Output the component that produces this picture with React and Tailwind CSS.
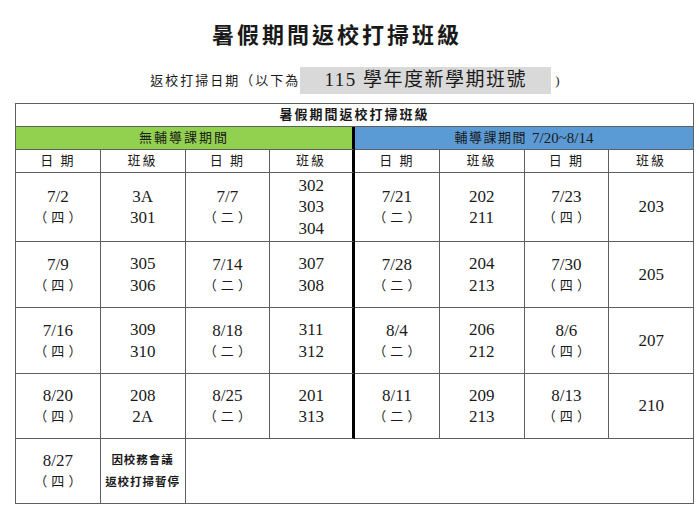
import React from 'react';

const FONT = '"Liberation Serif", "Noto Sans CJK TC", serif';

const leftRows = [
  [['7/2', '四'], ['3A', '301'], ['7/7', '二'], ['302', '303', '304']],
  [['7/9', '四'], ['305', '306'], ['7/14', '二'], ['307', '308']],
  [['7/16', '四'], ['309', '310'], ['8/18', '二'], ['311', '312']],
  [['8/20', '四'], ['208', '2A'], ['8/25', '二'], ['201', '313']],
];

const rightRows = [
  [['7/21', '二'], ['202', '211'], ['7/23', '四'], ['203']],
  [['7/28', '二'], ['204', '213'], ['7/30', '四'], ['205']],
  [['8/4', '二'], ['206', '212'], ['8/6', '四'], ['207']],
  [['8/11', '二'], ['209', '213'], ['8/13', '四'], ['210']],
];

const rowHeights = ['h-[69px]', 'h-[66px]', 'h-[66px]', 'h-[65px]'];

const DateCell = ({ date, day, thick }) => (
  <div
    className={`flex flex-col items-center justify-center border-b border-[#5f5f5f] ${
      thick ? 'border-r-[3px] border-r-black' : 'border-r'
    }`}
  >
    <span className="text-[17px] leading-[21px]">{date}</span>
    <span className="text-[13px] leading-[21px] tracking-[4px] pl-[4px]">（{day}）</span>
  </div>
);

const ClassCell = ({ items, thick }) => (
  <div
    className={`flex flex-col items-center justify-center border-b border-[#5f5f5f] ${
      thick ? 'border-r-[3px] border-r-black' : 'border-r'
    }`}
  >
    {items.map(c => (
      <span key={c} className="text-[17px] leading-[21.5px]">{c}</span>
    ))}
  </div>
);

const HeadCell = ({ label, thick }) => (
  <div
    className={`flex items-center justify-center border-b border-[#5f5f5f] text-[13px] tracking-[2px] ${
      thick ? 'border-r-[3px] border-r-black' : 'border-r'
    }`}
  >
    {label}
  </div>
);

export default function App() {
  return (
    <div className="w-[700px] h-[515px] bg-white text-[#1a1a1a] overflow-hidden" style={{ fontFamily: FONT }}>
      {/* Title */}
      <div className="pt-[22px] pr-[26px] text-center text-[22px] font-bold tracking-[3px] leading-[28px]">
        暑假期間返校打掃班級
      </div>

      {/* Subtitle */}
      <div className="mt-[17px] flex items-center justify-center pl-[10px]">
        <span className="text-[13px] tracking-[2px]">返校打掃日期（以下為</span>
        <span className="bg-[#d9d9d9] h-[27px] w-[251px] flex items-center justify-center text-[19px] tracking-[1.5px]">
          115 學年度新學期班號
        </span>
        <span className="text-[13px] ml-[4px]">)</span>
      </div>

      {/* Table */}
      <div className="mt-[9px] ml-[15px] w-[679px] border-l border-t border-[#5f5f5f] grid grid-cols-8">
        <div className="col-span-8 h-[23px] flex items-center justify-center border-r border-b border-[#5f5f5f] text-[13px] font-bold tracking-[2px]">
          暑假期間返校打掃班級
        </div>

        <div className="col-span-4 h-[23px] flex items-center justify-center bg-[#92d050] border-b border-[#5f5f5f] border-r-[3px] border-r-black text-[13px] tracking-[2px]">
          無輔導課期間
        </div>
        <div className="col-span-4 h-[23px] flex items-center justify-center bg-[#5b9bd5] border-r border-b border-[#5f5f5f] text-[13px] tracking-[1.5px]">
          輔導課期間 <span className="ml-[5px] text-[15px] tracking-normal">7/20~8/14</span>
        </div>

        {['日 期', '班級', '日 期', '班級', '日 期', '班級', '日 期', '班級'].map((l, i) => (
          <div key={i} className="h-[23px] grid">
            <HeadCell label={l} thick={i === 3} />
          </div>
        ))}

        {leftRows.map((row, r) => (
          <React.Fragment key={r}>
            {[...row, ...rightRows[r]].map((cell, i) => (
              <div key={i} className={`${rowHeights[r]} grid`}>
                {i % 2 === 0 ? (
                  <DateCell date={cell[0]} day={cell[1]} thick={i === 3} />
                ) : (
                  <ClassCell items={cell} thick={i === 3} />
                )}
              </div>
            ))}
          </React.Fragment>
        ))}

        <div className="h-[65px] grid">
          <DateCell date="8/27" day="四" />
        </div>
        <div className="h-[65px] flex flex-col items-center justify-center border-r border-b border-[#5f5f5f] text-[11.5px] font-bold tracking-[1px] leading-[22px]">
          <span>因校務會議</span>
          <span>返校打掃暫停</span>
        </div>
        <div className="col-span-6 h-[65px] border-r border-b border-[#5f5f5f]" />
      </div>
    </div>
  );
}
